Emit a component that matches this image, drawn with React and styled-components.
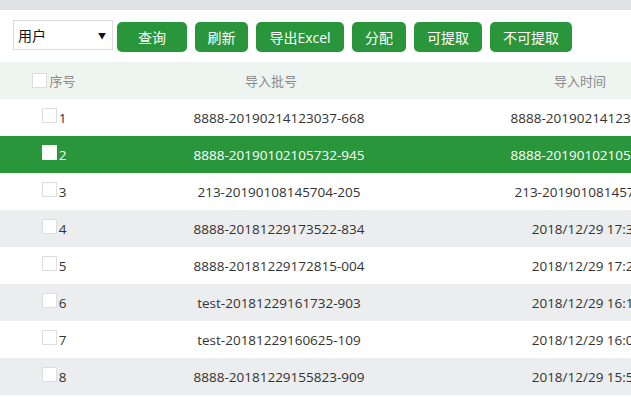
import React from 'react';
import styled, { createGlobalStyle } from 'styled-components';

const GlobalStyle = createGlobalStyle`
  html, body {
    margin: 0;
    padding: 0;
    overflow: hidden;
    background: #fff;
    font-family: "Open Sans", "Noto Sans CJK SC", sans-serif;
  }
`;

const Page = styled.div`
  width: 780px;
  border-top: 10px solid #dfe2e5;
`;

const Toolbar = styled.div`
  display: flex;
  align-items: flex-start;
  gap: 8px;
  padding: 10px 13px;
  height: 32px;
  background: #fff;
`;

const SelectWrap = styled.div`
  position: relative;
  width: 100px;
  height: 30px;
  margin-right: -4px;
  span {
    position: absolute;
    right: 7px;
    top: 10px;
    font-size: 8px;
    color: #111;
    pointer-events: none;
  }
`;

const Select = styled.select`
  appearance: none;
  width: 100%;
  height: 100%;
  box-sizing: border-box;
  border: 1px solid #dcdcdc;
  background: #fff;
  padding: 0 4px;
  font-size: 14px;
  font-family: "Noto Sans CJK SC", sans-serif;
  color: #111;
  outline: none;
`;

const Button = styled.button`
  width: ${p => p.w}px;
  height: 30px;
  margin-top: 2px;
  border: none;
  border-radius: 5px;
  background: #2a963b;
  color: #fff;
  font-size: 14px;
  font-family: "Open Sans", "Noto Sans CJK SC", sans-serif;
  padding: 0;
  cursor: pointer;
`;

const Row = styled.div`
  display: grid;
  grid-template-columns: ${p => p.cols};
  height: 37px;
  align-items: center;
  background: ${p => (p.selected ? '#2a963b' : p.even ? '#ebedee' : '#fff')};
  color: ${p => (p.selected ? '#fff' : '#333')};
  font-size: 13.5px;
`;

const HeadRow = styled(Row)`
  background: #eef4ef;
  color: #8a8a8a;
  font-size: 13px;
  font-family: "Noto Sans CJK SC", sans-serif;
`;

const Cell = styled.div`
  display: flex;
  justify-content: center;
  align-items: center;
  white-space: nowrap;
`;

const Check = styled.span`
  display: inline-block;
  width: 15px;
  height: 15px;
  box-sizing: border-box;
  border: 1px solid ${p => (p.on ? '#fff' : '#dedede')};
  background: #fff;
  margin-right: 2px;
  margin-top: ${p => (p.head ? 0 : -4)}px;
`;

const buttons = [
  ['查询', 70],
  ['刷新', 53],
  ['导出Excel', 88],
  ['分配', 54],
  ['可提取', 68],
  ['不可提取', 82],
];

const rows = [
  ['8888-20190214123037-668', '8888-20190214123037-668'],
  ['8888-20190102105732-945', '8888-20190102105732-945'],
  ['213-20190108145704-205', '213-20190108145704-205'],
  ['8888-20181229173522-834', '2018/12/29 17:35:22'],
  ['8888-20181229172815-004', '2018/12/29 17:28:15'],
  ['test-20181229161732-903', '2018/12/29 16:17:32'],
  ['test-20181229160625-109', '2018/12/29 16:06:25'],
  ['8888-20181229155823-909', '2018/12/29 15:58:23'],
];

export default function App() {
  return (
    <Page>
      <GlobalStyle />
      <Toolbar>
        <SelectWrap>
          <Select defaultValue="user">
            <option value="user">用户</option>
          </Select>
          <span>▼</span>
        </SelectWrap>
        {buttons.map(([label, w]) => (
          <Button key={label} w={w}>{label}</Button>
        ))}
      </Toolbar>

      <HeadRow cols="108px 326px 292px">
        <Cell><Check head />序号</Cell>
        <Cell>导入批号</Cell>
        <Cell>导入时间</Cell>
      </HeadRow>

      {rows.map(([batch, time], i) => (
        <Row key={i} cols="108px 342px 292px" even={i % 2 === 1} selected={i === 1}>
          <Cell><Check on={i === 1} />{i + 1}</Cell>
          <Cell>{batch}</Cell>
          <Cell>{time}</Cell>
        </Row>
      ))}
    </Page>
  );
}
